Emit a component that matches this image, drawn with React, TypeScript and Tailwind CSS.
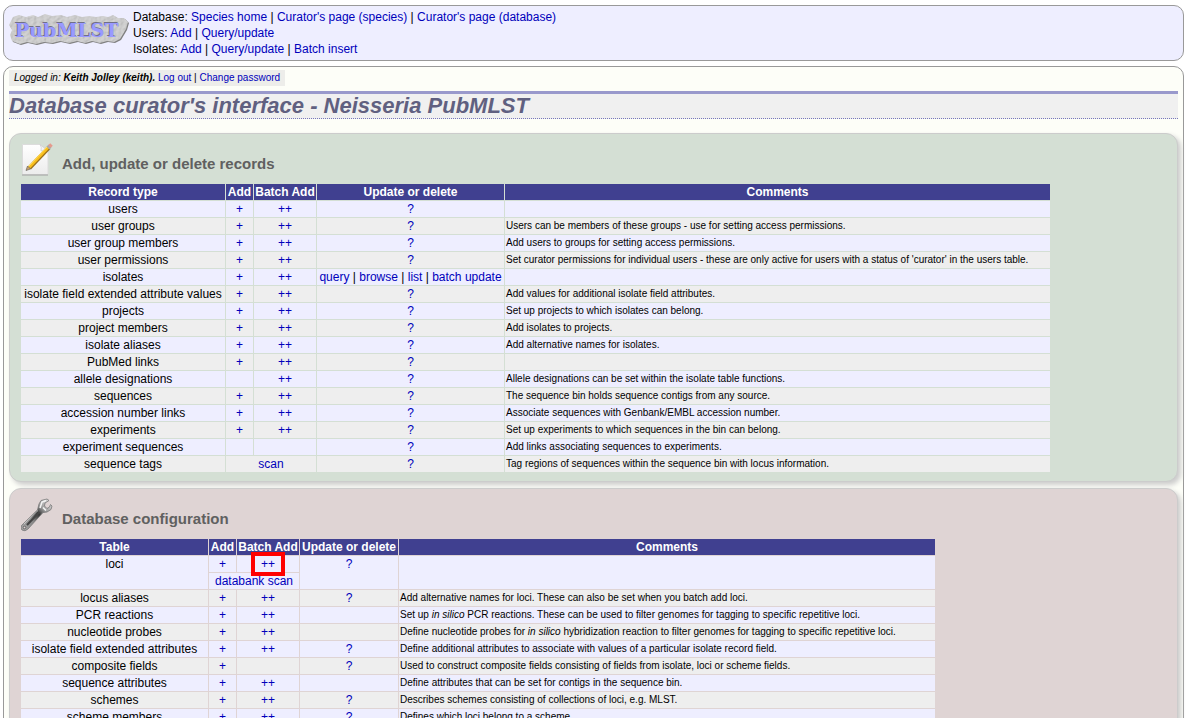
import type { ReactNode } from 'react';

interface RecordRow {
    name: string;
    add?: boolean;
    batch?: boolean;
    scan?: string;
    update?: string[];
    comment?: ReactNode;
}

const Q = ['?'];

const RECORDS: RecordRow[] = [
    { name: 'users', add: true, batch: true, update: Q },
    { name: 'user groups', add: true, batch: true, update: Q, comment: 'Users can be members of these groups - use for setting access permissions.' },
    { name: 'user group members', add: true, batch: true, update: Q, comment: 'Add users to groups for setting access permissions.' },
    { name: 'user permissions', add: true, batch: true, update: Q, comment: "Set curator permissions for individual users - these are only active for users with a status of 'curator' in the users table." },
    { name: 'isolates', add: true, batch: true, update: ['query', 'browse', 'list', 'batch update'] },
    { name: 'isolate field extended attribute values', add: true, batch: true, update: Q, comment: 'Add values for additional isolate field attributes.' },
    { name: 'projects', add: true, batch: true, update: Q, comment: 'Set up projects to which isolates can belong.' },
    { name: 'project members', add: true, batch: true, update: Q, comment: 'Add isolates to projects.' },
    { name: 'isolate aliases', add: true, batch: true, update: Q, comment: 'Add alternative names for isolates.' },
    { name: 'PubMed links', add: true, batch: true, update: Q },
    { name: 'allele designations', batch: true, update: Q, comment: 'Allele designations can be set within the isolate table functions.' },
    { name: 'sequences', add: true, batch: true, update: Q, comment: 'The sequence bin holds sequence contigs from any source.' },
    { name: 'accession number links', add: true, batch: true, update: Q, comment: 'Associate sequences with Genbank/EMBL accession number.' },
    { name: 'experiments', add: true, batch: true, update: Q, comment: 'Set up experiments to which sequences in the bin can belong.' },
    { name: 'experiment sequences', update: Q, comment: 'Add links associating sequences to experiments.' },
    { name: 'sequence tags', scan: 'scan', update: Q, comment: 'Tag regions of sequences within the sequence bin with locus information.' },
];

const CONFIG: RecordRow[] = [
    { name: 'locus aliases', add: true, batch: true, update: Q, comment: 'Add alternative names for loci. These can also be set when you batch add loci.' },
    { name: 'PCR reactions', add: true, batch: true, comment: <>Set up <i>in silico</i> PCR reactions. These can be used to filter genomes for tagging to specific repetitive loci.</> },
    { name: 'nucleotide probes', add: true, batch: true, comment: <>Define nucleotide probes for <i>in silico</i> hybridization reaction to filter genomes for tagging to specific repetitive loci.</> },
    { name: 'isolate field extended attributes', add: true, batch: true, update: Q, comment: 'Define additional attributes to associate with values of a particular isolate record field.' },
    { name: 'composite fields', add: true, update: Q, comment: 'Used to construct composite fields consisting of fields from isolate, loci or scheme fields.' },
    { name: 'sequence attributes', add: true, batch: true, comment: 'Define attributes that can be set for contigs in the sequence bin.' },
    { name: 'schemes', add: true, batch: true, update: Q, comment: 'Describes schemes consisting of collections of loci, e.g. MLST.' },
    { name: 'scheme members', add: true, batch: true, update: Q, comment: 'Defines which loci belong to a scheme.' },
];

const MENU = [
    { label: 'Database', links: ['Species home', "Curator's page (species)", "Curator's page (database)"] },
    { label: 'Users', links: ['Add', 'Query/update'] },
    { label: 'Isolates', links: ['Add', 'Query/update', 'Batch insert'] },
];

const RECORD_COLS = ['w-[204px]', 'w-[27px]', 'w-[62px]', 'w-[187px]', 'w-[545px]'];
const CONFIG_COLS = ['w-[187px]', 'w-[27px]', 'w-[62px]', 'w-[98px]', 'w-[536px]'];

function Links({ items }: { items: string[] }) {
    return (
        <>
            {items.map((item, i) => (
                <span key={item}>
                    {i > 0 && ' | '}
                    <a href="#" className="text-[#0000bb]">{item}</a>
                </span>
            ))}
        </>
    );
}

function Row({ row, shaded }: { row: RecordRow; shaded: boolean }) {
    return (
        <tr className={shaded ? 'bg-[#eeeeee]' : 'bg-[#eeeeff]'}>
            <td>{row.name}</td>
            {row.scan ? (
                <td colSpan={2}><Links items={[row.scan]} /></td>
            ) : (
                <>
                    <td>{row.add && <Links items={['+']} />}</td>
                    <td>{row.batch && <Links items={['++']} />}</td>
                </>
            )}
            <td>{row.update && <Links items={row.update} />}</td>
            <td className="px-px text-left text-[10px]/4">{row.comment}</td>
        </tr>
    );
}

function Head({ first, cols }: { first: string; cols: string[] }) {
    return (
        <>
            <colgroup>
                {cols.map((width, i) => <col key={i} className={width} />)}
            </colgroup>
            <thead>
                <tr className="bg-[#404090] text-white">
                    {[first, 'Add', 'Batch Add', 'Update or delete', 'Comments'].map(label => (
                        <th key={label} scope="col" className="font-bold">{label}</th>
                    ))}
                </tr>
            </thead>
        </>
    );
}

function Logo() {
    return (
        <svg viewBox="0 0 120 34" className="h-[34px] w-[120px] shrink-0" role="img" aria-label="PubMLST">
            <defs>
                <filter id="stone" x="0" y="0" width="100%" height="100%">
                    <feTurbulence type="fractalNoise" baseFrequency="0.3" numOctaves="3" seed="4" result="noise" />
                    <feDiffuseLighting in="noise" surfaceScale="0.8" diffuseConstant="1" lightingColor="#d6d6d6" result="light">
                        <feDistantLight azimuth="225" elevation="65" />
                    </feDiffuseLighting>
                    <feComposite in="light" in2="SourceGraphic" operator="in" />
                </filter>
            </defs>
            <path d="M4 4 10 2 17 4 24 2 29 4 36 1 43 3 52 2 58 4 66 2 73 4 80 3 87 4 94 3 99 4 104 2 109 5 115 5 119 9 117 16 114 21 111 26 105 29 98 28 91 30 83 28 76 30 68 28 60 30 51 28 43 30 35 29 27 31 18 29 11 31 3 28 1 22 3 17 0 12 2 8Z" fill="#808080" transform="translate(1 1)" />
            <path d="M4 4 10 2 17 4 24 2 29 4 36 1 43 3 52 2 58 4 66 2 73 4 80 3 87 4 94 3 99 4 104 2 109 5 115 5 119 9 117 16 114 21 111 26 105 29 98 28 91 30 83 28 76 30 68 28 60 30 51 28 43 30 35 29 27 31 18 29 11 31 3 28 1 22 3 17 0 12 2 8Z" fill="#c4c4c4" filter="url(#stone)" />
            <g fontFamily="'DejaVu Serif', serif" fontWeight="700" fontSize="19">
                <text x="5" y="23" fill="#707088">PubMLST</text>
                <text x="6" y="24" fill="#9999ff">PubMLST</text>
            </g>
        </svg>
    );
}

function PencilIcon() {
    return (
        <svg viewBox="0 0 32 34" className="h-[34px] w-8 shrink-0" aria-hidden="true">
            <defs>
                <linearGradient id="sheet" x1="0" y1="0" x2="0" y2="1">
                    <stop offset="0" stopColor="#fff" />
                    <stop offset="1" stopColor="#ececec" />
                </linearGradient>
            </defs>
            <path d="M1.500 1.500H19L27 8V31.500H1.500Z" fill="url(#sheet)" stroke="#dcdcdc" />
            <path d="M1 32H27" stroke="#a0a0a0" />
            <path d="M19 1.500Q21 4 20 8 24 6 27 8Z" fill="#f4f4f4" stroke="#ccc" strokeWidth=".7" />
            <path d="M8.500 25 28 4.500" stroke="#99701c" strokeWidth="4" />
            <path d="M8 24.500 27.500 4" stroke="#f9bf1b" strokeWidth="3" />
            <path d="M7.500 23.500 26.500 3.500" stroke="#ffe06a" />
            <path d="M5 27.500 6.500 23 9.500 26Z" fill="#c9a26a" stroke="#555" strokeWidth=".6" />
            <path d="M27 5 29 3" stroke="#aaa" strokeWidth="4" />
            <path d="M28.500 3.500 30.500 1.500" stroke="#e59a8c" strokeWidth="3.500" />
        </svg>
    );
}

function WrenchIcon() {
    return (
        <svg viewBox="0 0 32 34" className="h-[34px] w-8 shrink-0" aria-hidden="true">
            <defs>
                <linearGradient id="steel" x1="0" y1="1" x2="1" y2="0">
                    <stop offset="0" stopColor="#aaa" />
                    <stop offset=".35" stopColor="#888" />
                    <stop offset=".55" stopColor="#333" />
                    <stop offset=".7" stopColor="#999" />
                    <stop offset="1" stopColor="#eee" />
                </linearGradient>
            </defs>
            <path d="M.5 27.500 16.500 12 18 6 20 2.500 26 1 28 2.500 24 5 23.500 8 26 10.500 28.500 9 29.500 6.500 31 8 30 11.500 26 14 22 14.500 7 31Q4 34 1 32-1 30 .5 27.500Z" fill="url(#steel)" stroke="#777" strokeWidth=".8" />
            <path d="M6 27 18.500 14" stroke="#444" strokeWidth="2" />
            <path d="M3 26 17 12.500" stroke="#d4d4d4" strokeWidth=".8" />
            <path d="M19 10 21 4 25 2.500M22 9.500 25 12.500" fill="none" stroke="#f4f4f4" strokeWidth="1.500" />
            <circle cx="3.500" cy="29.500" r="1.300" fill="#dfd4d4" stroke="#555" strokeWidth=".8" />
        </svg>
    );
}

function Panel({ title, icon, className, children }: { title: string; icon: ReactNode; className: string; children: ReactNode }) {
    return (
        <section className={`rounded-xl border border-[#cccccc] px-2.5 pb-2 pt-[9px] shadow-[3px_3px_5px_#cccccc] ${className}`}>
            <div className="flex items-center gap-[9px] pl-px">
                {icon}
                <h2 className="pt-2 text-[15px]/5 font-bold text-[#606060]">{title}</h2>
            </div>
            <table className="mt-1.5 table-fixed border-separate border-spacing-px whitespace-nowrap text-center text-xs/4">
                {children}
            </table>
        </section>
    );
}

export default function App() {
    return (
        <div className="flex h-screen flex-col gap-[5px] overflow-hidden bg-white px-[3px] pt-[5px] font-['Liberation_Sans',Arial,sans-serif] text-xs/4 text-black">
            <header className="flex shrink-0 gap-1 rounded-[10px] border border-[#999999] bg-[#eeeeff] px-[5px] py-[3px]">
                <div className="pt-1"><Logo /></div>
                <nav>
                    {MENU.map(group => (
                        <div key={group.label}>{group.label}: <Links items={group.links} /></div>
                    ))}
                </nav>
            </header>

            <main className="shrink-0 rounded-[10px] border border-[#999999] bg-[#fdfef8] px-[5px] pt-[3px]">
                <p className="w-fit bg-[#ededea] px-[5px] text-[10px]/4">
                    <i>Logged in: <b>Keith Jolley (keith).</b></i> <Links items={['Log out', 'Change password']} />
                </p>
                <h1 className="mt-[5px] border-b border-t-3 border-b-[#7777bb] border-t-[#9999cc] bg-[#f0f0f0] text-[22px]/6 font-bold italic text-[#606080] [border-bottom-style:dotted]">
                    Database curator's interface - Neisseria PubMLST
                </h1>

                <div className="mt-3.5 flex flex-col gap-1.5">
                    <Panel title="Add, update or delete records" icon={<PencilIcon />} className="bg-[#d4dfd4]">
                        <Head first="Record type" cols={RECORD_COLS} />
                        <tbody>
                            {RECORDS.map((row, i) => <Row key={row.name} row={row} shaded={i % 2 === 1} />)}
                        </tbody>
                    </Panel>

                    <Panel title="Database configuration" icon={<WrenchIcon />} className="bg-[#dfd4d4]">
                        <Head first="Table" cols={CONFIG_COLS} />
                        <tbody>
                            <tr className="bg-[#eeeeff] align-top">
                                <td rowSpan={2}>loci</td>
                                <td><Links items={['+']} /></td>
                                <td className="relative">
                                    <Links items={['++']} />
                                    <span className="pointer-events-none absolute -inset-y-1 inset-x-3.5 border-4 border-[#ff0000]" />
                                </td>
                                <td rowSpan={2}><Links items={Q} /></td>
                                <td rowSpan={2} />
                            </tr>
                            <tr className="bg-[#eeeeff]">
                                <td colSpan={2}><Links items={['databank scan']} /></td>
                            </tr>
                            {CONFIG.map((row, i) => <Row key={row.name} row={row} shaded={i % 2 === 0} />)}
                        </tbody>
                    </Panel>
                </div>
            </main>
        </div>
    );
}
